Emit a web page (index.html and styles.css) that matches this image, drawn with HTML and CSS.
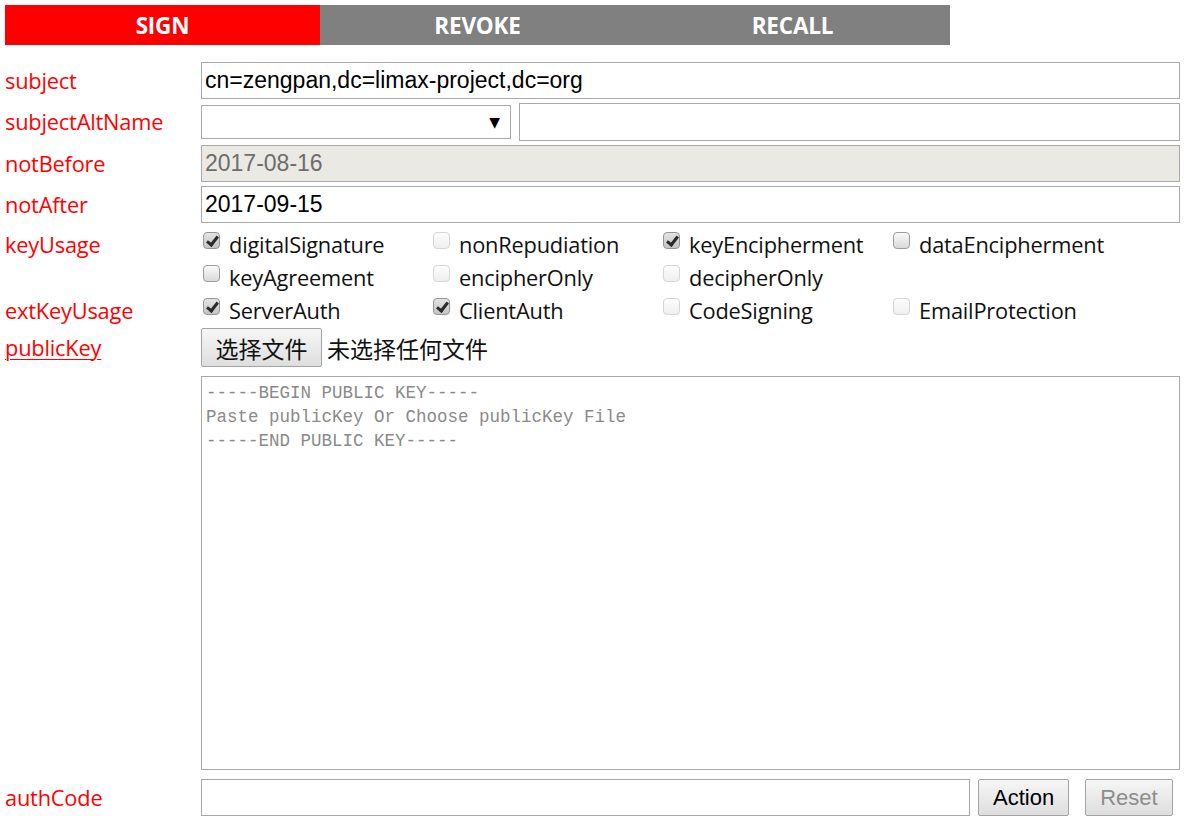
FILE: index.html
```html
<!DOCTYPE html>
<html>
<head>
<meta charset="utf-8">
<link rel="stylesheet" href="styles.css">
</head>
<body>
<div class="tabs">
  <div class="tab active">SIGN</div>
  <div class="tab">REVOKE</div>
  <div class="tab">RECALL</div>
</div>
<div class="form">
  <div class="row r-subject">
    <div class="label">subject</div>
    <div class="field"><input class="text" type="text" value="cn=zengpan,dc=limax-project,dc=org"></div>
  </div>

  <div class="row r-alt">
    <div class="label">subjectAltName</div>
    <div class="field alt">
      <div class="select"><span class="arrow">▼</span></div>
      <input class="text alt-input" type="text">
    </div>
  </div>

  <div class="row">
    <div class="label">notBefore</div>
    <div class="field"><input class="text readonly" type="text" value="2017-08-16" readonly></div>
  </div>

  <div class="row r-after">
    <div class="label">notAfter</div>
    <div class="field"><input class="text" type="text" value="2017-09-15"></div>
  </div>

  <div class="row r-checks">
    <div class="label top">keyUsage</div>
    <div class="checks">
      <label class="check"><span class="box checked"></span>digitalSignature</label>
      <label class="check"><span class="box disabled"></span>nonRepudiation</label>
      <label class="check"><span class="box checked"></span>keyEncipherment</label>
      <label class="check"><span class="box"></span>dataEncipherment</label>
      <label class="check"><span class="box"></span>keyAgreement</label>
      <label class="check"><span class="box disabled"></span>encipherOnly</label>
      <label class="check"><span class="box disabled"></span>decipherOnly</label>
    </div>
  </div>

  <div class="row r-ext">
    <div class="label top">extKeyUsage</div>
    <div class="checks">
      <label class="check"><span class="box checked"></span>ServerAuth</label>
      <label class="check"><span class="box checked"></span>ClientAuth</label>
      <label class="check"><span class="box disabled"></span>CodeSigning</label>
      <label class="check"><span class="box disabled"></span>EmailProtection</label>
    </div>
  </div>

  <div class="row r-file">
    <div class="label"><u>publicKey</u></div>
    <div class="file"><span class="filebtn">选择文件</span><span class="filetext">未选择任何文件</span></div>
  </div>

  <div class="row r-area">
    <div class="label"></div>
    <div class="field"><textarea class="area" placeholder="-----BEGIN PUBLIC KEY-----
Paste publicKey Or Choose publicKey File
-----END PUBLIC KEY-----"></textarea></div>
  </div>

  <div class="row">
    <div class="label">authCode</div>
    <div class="field auth">
      <input class="text auth-input" type="text">
      <span class="btn">Action</span>
      <span class="btn dim">Reset</span>
    </div>
  </div>
</div>
</body>
</html>
```
FILE: styles.css
```css
html, body {
  margin: 0;
  padding: 0;
  background: #fff;
}
body {
  padding: 5px;
  width: 1175px;
  font-family: "Open Sans", "Noto Sans CJK SC", sans-serif;
}
.tabs {
  display: flex;
  width: 945px;
  height: 40px;
}
.tab {
  flex: 1;
  background: #808080;
  color: #fff;
  font-weight: bold;
  font-size: 22.5px;
  display: flex;
  align-items: center;
  justify-content: center;
  letter-spacing: -0.2px;
}
.tab.active {
  background: #ff0000;
}
.form {
  margin-top: 17px;
  display: flex;
  flex-direction: column;
}
.row {
  display: flex;
  margin-bottom: 4px;
}
.r-after { margin-bottom: 5px; }
.r-checks { margin-bottom: 0; }
.r-ext { margin-bottom: 1px; }
.r-file { margin-bottom: 9px; }
.r-area { margin-bottom: 9px; }
.label {
  width: 196px;
  flex: none;
  color: #ff0000;
  font-size: 21.8px;
  display: flex;
  align-items: center;
  line-height: 1;
  letter-spacing: -0.2px;
}
.label.top {
  align-items: flex-start;
  padding-top: 6px;
}
.label u {
  text-decoration-thickness: 1px;
  text-underline-offset: 3px;
}
.field {
  display: flex;
  flex: 1;
}
.text {
  box-sizing: border-box;
  width: 100%;
  height: 37px;
  border: 1px solid #a9a9a9;
  padding: 0 3px;
  font-family: "Liberation Sans", Arial, sans-serif;
  font-size: 23px;
  color: #000;
  outline: none;
  margin: 0;
}
.text.readonly {
  background: #ebe9e4;
  color: #6d6d6d;
}
.alt {
  gap: 8px;
  align-items: center;
  height: 38px;
}
.select {
  box-sizing: border-box;
  width: 310px;
  height: 34px;
  border: 1px solid #a9a9a9;
  background: #fff;
  display: flex;
  align-items: center;
  justify-content: flex-end;
  padding-right: 10px;
  flex: none;
}
.arrow {
  font-size: 14px;
  color: #000;
  font-family: "DejaVu Sans", sans-serif;
}
.alt-input {
  flex: 1;
  height: 38px;
}
.checks {
  display: grid;
  grid-template-columns: repeat(4, 230px);
  grid-auto-rows: 33px;
}
.check {
  display: flex;
  align-items: center;
  font-size: 21.8px;
  color: #111;
  padding-left: 2px;
  line-height: 1;
  letter-spacing: -0.2px;
}
.box {
  box-sizing: border-box;
  width: 17px;
  height: 17px;
  border: 1px solid #9c9c9c;
  border-radius: 4px;
  background: linear-gradient(#fafafa, #d9d9d9);
  margin-right: 9px;
  position: relative;
  top: -4px;
  flex: none;
}
.box.disabled {
  border-color: #d6d6d6;
  background: linear-gradient(#fdfdfd, #efefef);
}
.box.checked {
  background: linear-gradient(#e4e4e4, #c4c4c4);
  border-color: #959595;
}
.box.checked::after {
  content: "";
  position: absolute;
  left: 5px;
  top: 1px;
  width: 4px;
  height: 9px;
  border: solid #2a2a2a;
  border-width: 0 3px 3px 0;
  transform: rotate(38deg);
}
.file {
  display: flex;
  align-items: center;
  height: 39px;
}
.filebtn {
  box-sizing: border-box;
  width: 121px;
  height: 39px;
  border: 1px solid #a3a3a3;
  border-radius: 2px;
  background: linear-gradient(#f6f6f6, #dedede);
  font-family: "Noto Sans CJK SC", sans-serif;
  font-size: 23px;
  display: flex;
  align-items: center;
  justify-content: center;
  color: #111;
}
.filetext {
  margin-left: 5px;
  font-family: "Noto Sans CJK SC", sans-serif;
  font-size: 23px;
  color: #111;
}
.area {
  box-sizing: border-box;
  width: 100%;
  height: 394px;
  border: 1px solid #a9a9a9;
  padding: 4px 4px;
  margin: 0;
  resize: none;
  font-family: "Liberation Mono", monospace;
  font-size: 17.5px;
  line-height: 24px;
  outline: none;
}
.area::placeholder {
  color: #8a8a8a;
  opacity: 1;
}
.auth {
  align-items: center;
  gap: 8px;
}
.auth-input {
  width: 769px;
  flex: none;
}
.btn {
  box-sizing: border-box;
  height: 37px;
  padding: 0 14px;
  border: 1px solid #a3a3a3;
  border-radius: 2px;
  background: linear-gradient(#f6f6f6, #dedede);
  font-family: "Liberation Sans", sans-serif;
  font-size: 22px;
  display: flex;
  align-items: center;
  color: #000;
}
.btn.dim {
  color: #8d8d8d;
  margin-left: 8px;
}
```
